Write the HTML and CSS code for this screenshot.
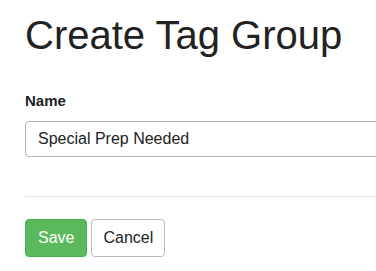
FILE: index.html
```html
<!DOCTYPE html>
<html>
<head>
    <meta charset="UTF-8">
    <title>Create Tag Group</title>
    <link rel="stylesheet" href="styles.css">
</head>
<body>
    <div class="page">
        <h1>Create Tag Group</h1>

        <form id="tagGroupForm">
            <div class="form-group">
                <label for="groupName">Name</label>
                <input type="text" id="groupName" class="form-control" value="Special Prep Needed">
            </div>

            <hr>

            <div class="form-actions">
                <button type="submit" class="btn btn-save">Save</button>
                <button type="button" class="btn btn-cancel">Cancel</button>
            </div>
        </form>
    </div>
</body>
</html>
```

FILE: styles.css
```css
html, body {
    margin: 0;
    padding: 0;
    overflow: hidden;
}

body {
    font-family: "Liberation Sans", Arial, sans-serif;
    color: #222;
    background: #fff;
}

.page {
    width: 600px;
    padding: 0 25px;
}

h1 {
    margin: 13px 0 34px;
    font-size: 40px;
    line-height: 44px;
    font-weight: normal;
    color: #222;
}

.form-group label {
    display: block;
    margin-bottom: 10px;
    font-size: 15px;
    line-height: 20px;
    font-weight: bold;
}

.form-control {
    display: block;
    box-sizing: border-box;
    width: 100%;
    height: 36px;
    padding: 0 12px;
    font-family: inherit;
    font-size: 16px;
    color: #222;
    border: 1px solid #b4b4b4;
    border-radius: 4px;
}

hr {
    margin: 39px 0 22px;
    border: none;
    border-top: 1px solid #e3e3e3;
}

.form-actions {
    display: flex;
    gap: 4px;
}

.btn {
    box-sizing: border-box;
    height: 38px;
    padding: 0 12px;
    font-family: inherit;
    font-size: 16px;
    border-radius: 4px;
    cursor: pointer;
}

.btn-save {
    background-color: #5cb85c;
    border: 1px solid #4cae4c;
    color: #fff;
}

.btn-cancel {
    padding: 0 11px;
    background-color: #fff;
    border: 1px solid #bbb;
    color: #222;
}
```
